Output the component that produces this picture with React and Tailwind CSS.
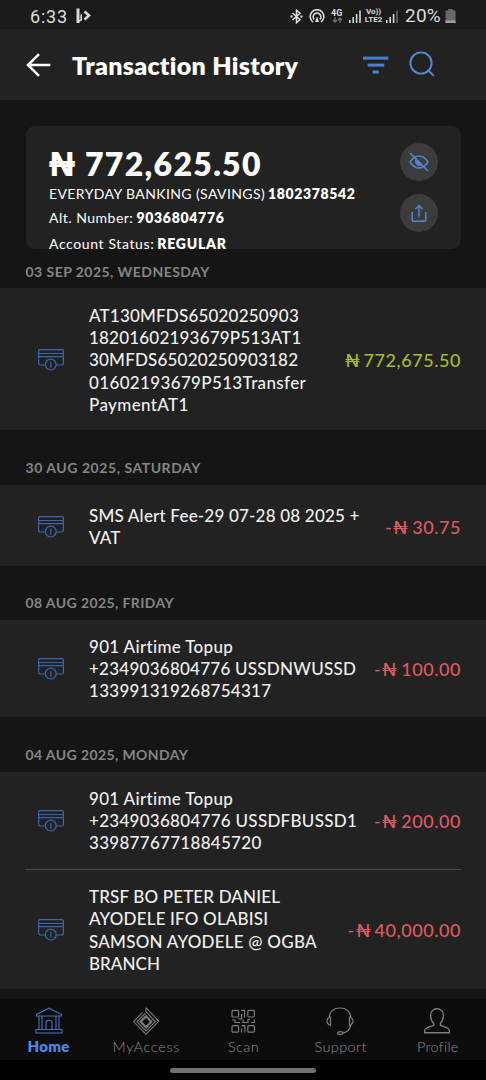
const groups = [
  {
    date: '03 SEP 2025, WEDNESDAY', head: 'h-[39px] pt-[13px] tracking-[0.46px]',
    rows: [{
      h: 'h-[142px]', sign: '', amount: '772,675.50', color: 'text-[#a5bd2b]',
      lines: [
        ['AT130MFDS65020250903', 'tracking-[0.19px]'],
        ['18201602193679P513AT1', 'tracking-[0.2px]'],
        ['30MFDS65020250903182', 'tracking-[0.19px]'],
        ['01602193679P513Transfer', 'tracking-[0.35px]'],
        ['PaymentAT1', 'tracking-[0.38px]'],
      ],
    }],
  },
  {
    date: '30 AUG 2025, SATURDAY', head: 'h-[55px] pt-[28px] tracking-[0.55px]',
    rows: [{
      h: 'h-[81px]', sign: '-', amount: '30.75', color: 'text-[#df5a62]',
      lines: [
        ['SMS Alert Fee-29 07-28 08 2025 +', 'tracking-[0.2px]'],
        ['VAT', 'tracking-[0.1px]'],
      ],
    }],
  },
  {
    date: '08 AUG 2025, FRIDAY', head: 'h-[54px] pt-[27px] tracking-[0.4px]',
    rows: [{
      h: 'h-[97px] pb-[2px]', sign: '-', amount: '100.00', color: 'text-[#df5a62]',
      lines: [
        ['901 Airtime Topup', 'tracking-[0.32px]'],
        ['+2349036804776 USSDNWUSSD', 'tracking-[0.25px]'],
        ['133991319268754317', 'tracking-[0.27px]'],
      ],
    }],
  },
  {
    date: '04 AUG 2025, MONDAY', head: 'h-[55px] pt-[28px] tracking-[0.4px]',
    rows: [
      {
        h: 'h-[97px] pb-[2px]', sign: '-', amount: '200.00', color: 'text-[#df5a62]',
        lines: [
          ['901 Airtime Topup', 'tracking-[0.32px]'],
          ['+2349036804776 USSDFBUSSD1', 'tracking-[0.28px]'],
          ['33987767718845720', 'tracking-[0.29px]'],
        ],
      },
      {
        h: 'h-[120px]', sign: '-', amount: '40,000.00', color: 'text-[#df5a62]',
        lines: [
          ['TRSF BO PETER DANIEL', 'tracking-[0.15px]'],
          ['AYODELE IFO OLABISI', 'tracking-[0.18px]'],
          ['SAMSON AYODELE @ OGBA', 'tracking-[0.24px]'],
          ['BRANCH', 'tracking-[0.05px]'],
        ],
      },
    ],
  },
];

function Signal({ dim }) {
  return (
    <svg className="h-[13px] w-[13px]" viewBox="0 0 13 13" fill="#d8d8d8">
      <rect x="0" y="10" width="1.6" height="3" />
      <rect x="3.4" y="7" width="1.6" height="6" />
      <rect x="6.8" y="4" width="1.6" height="9" />
      <rect x="10.2" y="0.5" width="1.6" height="12.5" fill={dim ? '#666' : '#d8d8d8'} />
    </svg>
  );
}

function StatusBar() {
  return (
    <div className="flex h-[29px] items-center bg-[#1b1b1b] pt-[3px] pl-[30px] font-[Roboto] text-[18px] text-[#dcdcdc]">
      <span className="w-[46px] tracking-[0.8px]">6:33</span>
      <svg className="h-[16px] w-[15px]" viewBox="0 0 15 16" fill="none" stroke="#d8d8d8">
        <path d="M2 0.5V15" strokeWidth="3" />
        <path d="M2 13.5L5.2 12V6.5" strokeWidth="1.6" />
        <path d="M8.5 3.5L13 7.5L8.5 11.5" strokeWidth="2.6" />
      </svg>
      <svg className="ml-[199px] h-[15px] w-[13px]" viewBox="0 0 13 15" fill="none" stroke="#dedede" strokeWidth="1.5">
        <path d="M2.5 4L10 10.7L6.5 13.7V1.3L10 4.3L2.5 11" />
        <path d="M0.5 7.5H2.6M10.4 7.5H12.5" strokeWidth="2" />
      </svg>
      <svg className="ml-[6px] h-[15px] w-[16px]" viewBox="0 0 16 15" fill="none" stroke="#dedede" strokeWidth="1.6">
        <path d="M4 13A6.8 6.8 0 1 1 12 13" />
        <path d="M5.2 10.4A3.8 3.8 0 1 1 10.8 10.4" />
        <path d="M8 7.5L10 13H6Z" fill="#dedede" stroke="none" />
      </svg>
      <span className="ml-[6px] flex w-[14px] flex-col text-[9px] leading-[8px] font-bold">
        <span>4G</span>
        <svg className="ml-px h-[6px] w-[11px]" viewBox="0 0 11 6" fill="none" stroke="#777" strokeWidth="1.2">
          <path d="M3 0V5M1 3L3 5L5 3M8 6V1M6 3L8 1L10 3" />
        </svg>
      </span>
      <span className="ml-[4px] flex"><Signal /></span>
      <span className="ml-[2px] flex w-[19px] flex-col items-center text-[8px] leading-[8px] font-bold whitespace-nowrap">
        <span>Vo))</span>
        <span>LTE2</span>
      </span>
      <span className="ml-[3px] flex"><Signal dim /></span>
      <span className="ml-[6px] w-[40px] text-[19px] tracking-[0.2px]">20%</span>
      <svg className="h-[14px] w-[11px]" viewBox="0 0 11 14">
        <path d="M3 0H8V1.5H10.5V14H0.5V1.5H3Z" fill="#686868" />
        <path d="M0.5 11.5H10.5V14H0.5Z" fill="#a0a0a0" />
      </svg>
    </div>
  );
}

function Header() {
  return (
    <header className="flex h-[71px] items-center bg-[#222222] pl-[26px]">
      <svg className="h-[24px] w-[26px]" viewBox="0 0 26 24" fill="none" stroke="#fff" strokeWidth="2.5">
        <path d="M24.3 12H2M13 1.2L2 12L13 22.8" />
      </svg>
      <h1 className="mt-[2px] ml-[20px] w-[291px] text-[25px] leading-none font-extrabold tracking-[0.3px] whitespace-nowrap text-white">Transaction History</h1>
      <svg className="h-[20px] w-[26px]" viewBox="0 0 26 20" fill="#4a80d4">
        <rect x="0" y="1.6" width="25.3" height="3" />
        <rect x="4.6" y="8.6" width="16.6" height="3" />
        <rect x="9.6" y="15.4" width="6.2" height="3.2" rx="0.6" />
      </svg>
      <svg className="-mt-[2px] ml-[20px] h-[26px] w-[26px]" viewBox="0 0 26 26" fill="none" stroke="#5588d8" strokeWidth="1.9">
        <circle cx="12" cy="12" r="10.6" />
        <path d="M19.4 19.4L24.8 24.8" />
      </svg>
    </header>
  );
}

function AccountCard() {
  return (
    <section className="mr-[25px] ml-[26px] mt-[26px] flex h-[123px] justify-between rounded-[9px] bg-[#222222] pr-[23px] pl-[23px] text-white">
      <div className="flex flex-col whitespace-nowrap">
        <div className="mt-[21px] flex h-[34px] items-center text-[32px] leading-[34px] font-extrabold">
          <span className="-ml-px w-[37px] origin-left scale-x-110">₦</span>
          <span className="tracking-[1.3px]">772,625.50</span>
        </div>
        <div className="mt-[3px] h-[20px] text-[14px] leading-[20px]">
          <span className="tracking-[0.4px]">EVERYDAY BANKING (SAVINGS)</span>
          <b className="ml-[3px] font-extrabold tracking-[0.62px]">1802378542</b>
        </div>
        <div className="mt-[4px] h-[20px] text-[14px] leading-[20px]">
          <span className="tracking-[0.5px]">Alt. Number:</span>
          <b className="ml-[3px] font-extrabold tracking-[0.7px]">9036804776</b>
        </div>
        <div className="mt-[6px] h-[20px] text-[14px] leading-[20px]">
          <span className="tracking-[0.62px]">Account Status:</span>
          <b className="ml-[3px] font-extrabold tracking-[0.75px]">REGULAR</b>
        </div>
      </div>
      <div className="mt-[17px] flex flex-col gap-[13px]">
        <button className="flex h-[38px] w-[38px] items-center justify-center rounded-full bg-[#3c3c3c]">
          <svg className="h-[20px] w-[20px]" viewBox="0 0 20 20" fill="none" stroke="#5485d0" strokeWidth="1.5">
            <path d="M1 10Q5 4 10 4T19 10Q15 16 10 16T1 10Z" />
            <path d="M7.3 7.5A3.7 3.7 0 0 0 12.5 12.5Z" fill="#5485d0" />
            <path d="M1 1L19 19" />
          </svg>
        </button>
        <button className="flex h-[38px] w-[38px] items-center justify-center rounded-full bg-[#3c3c3c]">
          <svg className="h-[19px] w-[16px]" viewBox="0 0 16 19" fill="none" stroke="#5485d0" strokeWidth="1.5">
            <path d="M1.2 8V15.5Q1.2 17.3 3 17.3H13Q14.8 17.3 14.8 15.5V8" />
            <path d="M8 12.5V1.5M4.5 5L8 1.5L11.5 5" />
          </svg>
        </button>
      </div>
    </section>
  );
}

function CardIcon() {
  return (
    <svg className="mt-[2px] h-[24px] w-[28px] shrink-0" viewBox="0 0 28 24" fill="none" stroke="#3c66ab" strokeWidth="1.2">
      <path d="M8 17H3Q1.6 17 1.6 15.6V3Q1.6 1.6 3 1.6H25Q26.4 1.6 26.4 3V15.6Q26.4 17 25 17H19" />
      <path d="M2 5.5H26M2 8.6H26" />
      <circle cx="13.8" cy="16.6" r="5.4" />
      <path d="M13.8 13.8V19.4" />
    </svg>
  );
}

function Row({ row, divided }) {
  return (
    <div className={`${row.h} relative flex items-center bg-[#222222] pr-[25px] pl-[37px] text-[17px] leading-[22.3px] font-medium text-[#f0f0f0]`}>
      {divided && <div className="absolute top-0 right-[25px] left-[25px] h-px bg-[#484848]" />}
      <CardIcon />
      <div className="mt-[3px] ml-[24px] flex-1 whitespace-nowrap">
        {row.lines.map(([text, spacing]) => (
          <div key={text} className={spacing}>{text}</div>
        ))}
      </div>
      <div className={`${row.color} mt-[3px] flex text-[18px] tracking-[0.55px] whitespace-nowrap`}>
        {row.sign && <span className="mr-[2px]">{row.sign}</span>}
        <span className="mr-[3px] origin-right scale-x-110">₦</span>
        <span>{row.amount}</span>
      </div>
    </div>
  );
}

const navIcons = {
  Home: (
    <g strokeWidth="1.1">
      <path d="M1.5 7.5L14 1.2L26.5 7.5V9H1.5ZM1 22.5H27V26H1ZM4 9V22.5M7 9V22.5M21 9V22.5M24 9V22.5" />
      <path d="M11 22.5V16Q11 13.3 14 13.3T17 16V22.5" />
    </g>
  ),
  MyAccess: (
    <g strokeWidth="1.2">
      <path d="M14 9.3L19.3 14.8L14 20.3L8.7 14.8Z" strokeWidth="2.2" />
      <path d="M14 0.8V4.6L23.2 14.8L14 24L5 14.8L13.2 6.5" />
      <path d="M14.2 0.8L26.8 14.3L14 27.2L1.6 14.6L10.5 5.6" strokeWidth="1.1" />
    </g>
  ),
  Scan: (
    <g strokeWidth="1.2">
      <rect x="3" y="3.4" width="6.6" height="6.6" rx="1.2" />
      <rect x="18.8" y="3.4" width="6.6" height="6.6" rx="1.2" />
      <rect x="3" y="18.6" width="6.6" height="6.6" rx="1.2" />
      <rect x="18.8" y="18.6" width="6.6" height="6.6" rx="1.2" />
      <path d="M12 3.4H15.5V10.5M12.6 7V12H9M3 13H6V15.5H11M14 12.5V15.5H19V12.5H21M22 15.5H25.4V12.5M12.5 25.5V21.5M12.5 18.6H15.8V25.5" />
    </g>
  ),
  Support: (
    <g strokeWidth="1.2">
      <path d="M3 10Q4.5 1 14 1T25 10M4.5 10Q1 11 1 14T4.5 18.5ZM23.5 10Q27 11 27 14T23.5 18.5ZM25 18Q23 25 17 26" />
      <ellipse cx="14.3" cy="26" rx="2.7" ry="1.3" />
    </g>
  ),
  Profile: (
    <path strokeWidth="1.4" d="M14 1.8C10 1.8 7.6 4.5 7.6 8.2C7.6 11.5 8.8 14.5 10.6 16.2V18.4C6.5 20 1.6 20.4 1.6 24V25.8H26.4V24C26.4 20.4 21.5 20 17.4 18.4V16.2C19.2 14.5 20.4 11.5 20.4 8.2C20.4 4.5 18 1.8 14 1.8Z" />
  ),
};

const tabs = [
  ['Home', 'text-[15px] font-extrabold tracking-[0.3px] text-[#4e86e4]'],
  ['MyAccess', 'text-[14.5px] font-light tracking-[0.65px] text-[#8c8c8c]'],
  ['Scan', 'text-[14.5px] font-light tracking-[0.4px] text-[#8c8c8c]'],
  ['Support', 'text-[14.5px] font-light tracking-[0.35px] text-[#8c8c8c]'],
  ['Profile', 'text-[14.5px] font-light tracking-[0.25px] text-[#8c8c8c]'],
];

export default function App() {
  return (
    <div className="flex h-[1080px] w-[486px] flex-col overflow-hidden bg-[#151515] font-['Lato','Noto_Sans',sans-serif]">
      <StatusBar />
      <Header />
      <main className="flex-1">
        <AccountCard />
        {groups.map((g) => (
          <section key={g.date}>
            <h2 className={`${g.head} pl-[25.5px] text-[14px] leading-[20px] font-bold text-[#858585]`}>{g.date}</h2>
            {g.rows.map((row, i) => <Row key={row.amount} row={row} divided={i > 0} />)}
          </section>
        ))}
      </main>
      <nav className="grid h-[61px] grid-cols-5 bg-[#0c0c0c]">
        {tabs.map(([name, style]) => (
          <div key={name} className={`flex flex-col items-center pt-[8px] ${style}`}>
            <svg className={name === 'Home' ? 'h-[28px] w-[28px] text-[#4472bd]' : 'h-[28px] w-[28px] text-[#7c7c7c]'} viewBox="0 0 28 28" fill="none" stroke="currentColor">
              {navIcons[name]}
            </svg>
            <span className={name === 'Home' ? 'mt-[1px] leading-[20px]' : 'mt-[2px] pl-px leading-[20px]'}>{name}</span>
          </div>
        ))}
      </nav>
      <div className="flex h-[20px] justify-center bg-black pt-[8px]">
        <div className="h-[5px] w-[146px] rounded-full bg-[#707070]" />
      </div>
    </div>
  );
}
